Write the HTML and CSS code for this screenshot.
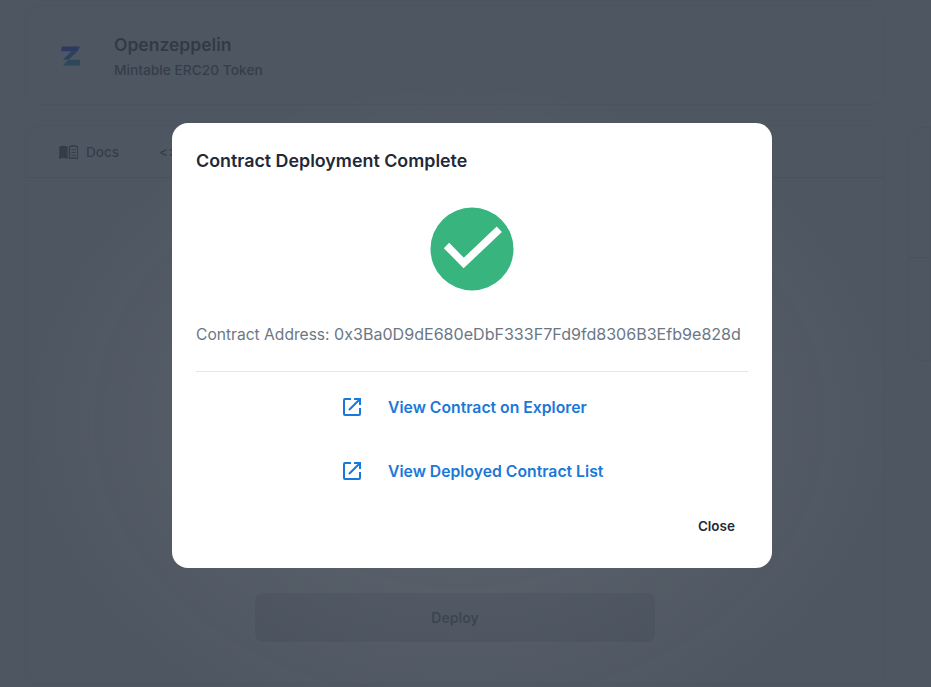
FILE: index.html
```html
<!DOCTYPE html>
<html lang="en">
<head>
    <meta charset="UTF-8">
    <title>Contract Deployment</title>
    <link rel="stylesheet" href="styles.css">
</head>
<body>
<div class="page">
    <div class="main-col">
        <div class="card header-card">
            <svg class="brand-logo" width="19" height="20" viewBox="0 0 20 20">
                <path d="M1 0h19l-2.500 5H0z" fill="#0020ff"/>
                <path d="M8 14h12v6H2z" fill="#0090d8"/>
                <path d="M11 5h6.500L8 14H2z" fill="#0060f0"/>
            </svg>
            <div>
                <div class="brand-name">Openzeppelin</div>
                <div class="brand-sub">Mintable ERC20 Token</div>
            </div>
        </div>
        <div class="card tabs-card">
            <div class="tabs">
                <span class="tab">
                    <svg width="19" height="14" viewBox="0 0 20 15">
                        <path d="M0 2c3-1.500 6-1.500 9 0v13c-3-1.500-6-1.500-9 0z" fill="#2f3845"/>
                        <path d="M11 2c3-1.500 6-1.500 9 0v13c-3-1.500-6-1.500-9 0z" fill="none" stroke="#2f3845" stroke-width="1.500"/>
                        <path d="M13 5h5M13 8h5M13 11h5" stroke="#2f3845"/>
                    </svg>
                    Docs
                </span>
                <span class="tab tab-code">&lt; &gt;</span>
            </div>
            <div class="tabs-body">
                <button class="deploy-btn">Deploy</button>
            </div>
        </div>
    </div>
    <div class="side-col">
        <div class="side-top"></div>
        <div class="side-bottom"></div>
    </div>
</div>

<div class="overlay">
    <div class="modal">
        <h2 class="modal-title">Contract Deployment Complete</h2>
        <div class="check-wrap">
            <svg width="84" height="84" viewBox="0 0 84 84">
                <circle cx="42" cy="42" r="41.500" fill="#38b57f"/>
                <path d="M16.500 38.500 33.700 56 69.300 22.300" fill="none" stroke="#fff" stroke-width="7.500"/>
            </svg>
        </div>
        <p class="address"><span class="address-label">Contract Address:</span> 0x3Ba0D9dE680eDbF333F7Fd9fd8306B3Efb9e828d</p>
        <div class="links">
            <a class="modal-link" href="#">
                <svg width="18" height="18" viewBox="0 0 18 18" fill="none" stroke="#1a78d8" stroke-width="2">
                    <path d="M8 1H2a1 1 0 0 0-1 1v14a1 1 0 0 0 1 1h14a1 1 0 0 0 1-1v-6"/>
                    <path d="M6 12 17 1M11 1h6v6"/>
                </svg>
                View Contract on Explorer
            </a>
            <a class="modal-link" href="#">
                <svg width="18" height="18" viewBox="0 0 18 18" fill="none" stroke="#1a78d8" stroke-width="2">
                    <path d="M8 1H2a1 1 0 0 0-1 1v14a1 1 0 0 0 1 1h14a1 1 0 0 0 1-1v-6"/>
                    <path d="M6 12 17 1M11 1h6v6"/>
                </svg>
                View Deployed Contract List
            </a>
        </div>
        <div class="modal-footer">
            <button class="close-btn">Close</button>
        </div>
    </div>
</div>
</body>
</html>
```

FILE: styles.css
```css
* {
    box-sizing: border-box;
}

html, body {
    height: 100%;
}

body {
    margin: 0;
    overflow: hidden;
    background: #fff;
    font-family: Inter, "Liberation Sans", sans-serif;
    color: #1f2937;
}

.page {
    display: flex;
    gap: 23px;
    padding: 5px 0 0 25px;
    height: 687px;
}

.main-col {
    width: 860px;
    display: flex;
    flex-direction: column;
    gap: 20px;
}

.card {
    border: 1px solid #e2e5e9;
    border-radius: 14px;
}

.header-card {
    height: 100px;
    display: flex;
    align-items: center;
    gap: 34px;
    padding: 3px 0 0 35px;
}

.brand-logo {
    margin-bottom: 1px;
}

.brand-name {
    font-size: 17.500px;
    line-height: 21px;
    font-weight: 600;
    margin-bottom: 7px;
}

.brand-sub {
    font-size: 13.750px;
    line-height: 17px;
    font-weight: 500;
    color: #374151;
}

.tabs-card {
    height: 560px;
}

.tabs {
    height: 52px;
    display: flex;
    align-items: center;
    gap: 40px;
    padding: 0 33px;
    border-bottom: 1px solid #d5d9de;
}

.tab {
    display: flex;
    align-items: center;
    gap: 8px;
    font-size: 13.500px;
    font-weight: 500;
    color: #374151;
}

.tab-code {
    word-spacing: -3px;
}

.tabs-body {
    display: flex;
    justify-content: center;
    padding-top: 415px;
}

.deploy-btn {
    width: 400px;
    height: 49px;
    border: 0;
    border-radius: 8px;
    background: #d6d9dd;
    color: #374151;
    font-family: inherit;
    font-size: 14px;
    font-weight: 600;
}

.side-col {
    flex: 1;
    margin-top: 122px;
    height: 234px;
    border: 1px solid #e2e5e9;
    border-radius: 14px 0 0 14px;
}

.side-top {
    height: 130px;
    border-bottom: 1px solid #d5d9de;
}

.overlay {
    position: fixed;
    inset: 0;
    display: flex;
    justify-content: center;
    align-items: flex-start;
    padding: 123px 0 0 13px;
    background: radial-gradient(ellipse 440px 340px at 460px 420px, rgba(255, 255, 255, 0.09), rgba(255, 255, 255, 0) 100%), rgba(52, 61, 73, 0.87);
}

.modal {
    width: 600px;
    height: 445px;
    padding: 0 24px;
    background: #fff;
    border-radius: 16px;
}

.modal-title {
    margin: 0;
    padding-top: 27px;
    font-size: 17.850px;
    line-height: 22px;
    font-weight: 600;
    color: #1f2937;
}

.check-wrap {
    display: flex;
    justify-content: center;
    margin-top: 35px;
}

.check-wrap svg {
    display: block;
}

.address {
    margin: 32px 0 0;
    height: 49px;
    border-bottom: 1px solid #e5e7eb;
    font-size: 16.070px;
    line-height: 22px;
    color: #6b7785;
    white-space: nowrap;
}

.address-label {
    font-size: 15.600px;
}

.links {
    display: flex;
    flex-direction: column;
    align-items: center;
    gap: 40px;
    margin-top: 23px;
}

.modal-link {
    display: flex;
    align-items: center;
    gap: 27px;
    height: 24px;
    width: 258px;
    font-size: 15.750px;
    font-weight: 600;
    color: #1a78d8;
    text-decoration: none;
    white-space: nowrap;
}

.modal-link svg {
    flex: none;
}

.modal-footer {
    display: flex;
    justify-content: flex-end;
    margin-top: 32px;
}

.close-btn {
    padding: 0 13px;
    height: 22px;
    border: 0;
    background: none;
    font-family: inherit;
    font-size: 13.500px;
    font-weight: 600;
    color: #1f2937;
}
```
